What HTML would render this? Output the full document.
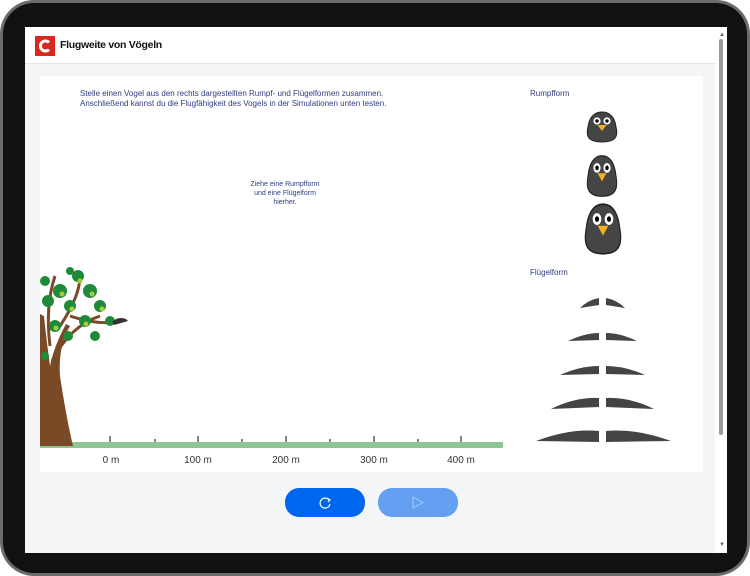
<!DOCTYPE html>
<html><head><meta charset="utf-8"><style>
*{margin:0;padding:0;box-sizing:border-box}
body{width:750px;height:576px;background:#fff;font-family:"Liberation Sans",sans-serif;position:relative;overflow:hidden}
.frame{position:absolute;left:0;top:0;width:750px;height:576px;border-radius:34px;background:#6b6b6b}
.inner{position:absolute;left:3px;top:3px;width:744px;height:570px;border-radius:31px;background:#111}
.screen{position:absolute;left:25px;top:27px;width:702px;height:526px;background:#f4f5f7;overflow:hidden}
.hdr{position:absolute;left:0;top:0;width:690px;height:37px;background:#fff;border-bottom:1px solid #e3e5ea}
.logo{position:absolute;left:10px;top:9px;width:20px;height:20px;background:#d9281f}
.title{position:absolute;left:35px;top:12px;font-size:10.5px;color:#111;font-weight:bold;letter-spacing:-.3px}
.sb{position:absolute;left:690px;top:0;width:12px;height:526px;background:#fff}
.thumb{position:absolute;left:694px;top:12px;width:4px;height:396px;background:#999;border-radius:2px}
.card{position:absolute;left:15px;top:49px;width:663px;height:396px;background:#fff}
.txt{position:absolute;color:#2e3d80;font-size:8px;line-height:10px}
.btn{position:absolute;top:461px;width:80px;height:29px;border-radius:14px}
</style></head><body>
<div class="frame"></div><div class="inner"></div>
<div class="screen">
<div class="hdr"><div class="logo"><svg width="20" height="20"><path d="M14 6.5A5 5 0 1 0 14 13.5" stroke="#fff" stroke-width="3" fill="none"/></svg></div><div class="title">Flugweite von Vögeln</div></div>
<div class="sb"></div><div class="thumb"></div>
<div style="position:absolute;left:694px;top:5px;font-size:6px;color:#666">▲</div>
<div style="position:absolute;left:694px;top:515px;font-size:6px;color:#666">▼</div>
<div class="card">
<div class="txt" style="left:40px;top:13px">Stelle einen Vogel aus den rechts dargestellten Rumpf- und Flügelformen zusammen.<br>Anschließend kannst du die Flugfähigkeit des Vogels in der Simulationen unten testen.</div>
<div class="txt" style="left:190px;top:104px;width:110px;text-align:center;font-size:7px;line-height:9px">Ziehe eine Rumpfform<br>und eine Flügelform<br>hierher.</div>
<div class="txt" style="left:490px;top:13px">Rumpfform</div>
<div class="txt" style="left:490px;top:192px">Flügelform</div>
<svg style="position:absolute;left:0;top:0" width="663" height="396">
<defs><g id="b"><path d="M0 -15C-9 -15 -13 -8 -14 0C-16 8 -15 15 0 15C15 15 16 8 14 0C13 -8 9 -15 0 -15Z" fill="#454545" stroke="#222"/><circle cx="-5" cy="-6" r="3.6" fill="#fff"/><circle cx="5" cy="-6" r="3.6" fill="#fff"/><circle cx="-5" cy="-6" r="1.7" fill="#000"/><circle cx="5" cy="-6" r="1.7" fill="#000"/><path d="M-4.5 -2L4.5 -2L0 4Z" fill="#f2b01e"/></g></defs>
<g transform="translate(562,51) scale(1,1)"><use href="#b"/></g>
<g transform="translate(562,100) scale(1,1.35)"><use href="#b"/></g>
<g transform="translate(563,153) scale(1.2,1.65)"><use href="#b"/></g>
<g fill="#444">
<path d="M559 229L540 232Q548 224 559 222Z"/><path d="M566 229L585 232Q577 224 566 222Z"/>
<path d="M559 264L528 265Q545 257 559 257Z"/><path d="M566 264L597 265Q580 257 566 257Z"/>
<path d="M559 298L520 299Q540 290 559 290Z"/><path d="M566 298L605 299Q585 290 566 290Z"/>
<path d="M559 331L511 333Q535 321 559 322Z"/><path d="M566 331L614 333Q590 321 566 322Z"/>
<path d="M559 366L496 365Q530 352 559 355Z"/><path d="M566 366L631 365Q595 352 566 355Z"/>
</g>
<rect x="0" y="366" width="463" height="6" fill="#8dc894"/>
<g stroke="#333" stroke-width="1.2">
<path d="M70 360V366M158 360V366M246 360V366M334 360V366M421 360V366"/>
<path d="M115 363V366M202 363V366M290 363V366M378 363V366"/></g>
<g font-family="Liberation Sans" font-size="10" fill="#333" text-anchor="middle">
<text x="71" y="387">0 m</text><text x="158" y="387">100 m</text><text x="246" y="387">200 m</text><text x="334" y="387">300 m</text><text x="421" y="387">400 m</text></g>
<path d="M0 370L33 370Q26 340 20 300Q18 270 30 250L26 248Q14 270 10 290Q6 260 4 240L0 238Z" fill="#7a4a26"/>
<path d="M12 285Q30 250 60 240M20 250Q40 220 40 200M10 270Q5 230 15 200M30 240Q60 250 80 245" stroke="#7a4a26" stroke-width="3" fill="none"/>
<g fill="#1f8a3a"><circle cx="38" cy="200" r="6"/><circle cx="50" cy="215" r="7"/><circle cx="20" cy="215" r="7"/><circle cx="60" cy="230" r="6"/><circle cx="30" cy="230" r="6"/><circle cx="8" cy="225" r="6"/><circle cx="45" cy="245" r="6"/><circle cx="15" cy="250" r="6"/><circle cx="70" cy="245" r="5"/><circle cx="5" cy="205" r="5"/><circle cx="28" cy="260" r="5"/><circle cx="55" cy="260" r="5"/><circle cx="5" cy="280" r="4"/><circle cx="30" cy="195" r="4"/></g>
<g fill="#a8cc3a"><circle cx="40" cy="205" r="2.5"/><circle cx="22" cy="218" r="2.5"/><circle cx="52" cy="218" r="2.5"/><circle cx="62" cy="233" r="2.5"/><circle cx="32" cy="233" r="2.5"/><circle cx="46" cy="248" r="2.5"/><circle cx="16" cy="252" r="2.5"/></g>
<path d="M72 246Q78 240 86 243L88 245L74 249Z" fill="#333"/>
</svg>
</div>
<div class="btn" style="left:260px;background:#0066ee"><svg width="80" height="29"><path d="M44 12A5 5 0 1 0 45 16" stroke="#fff" stroke-width="1.2" fill="none"/><path d="M42 10L45 12L43 14" stroke="#fff" stroke-width="1.2" fill="none"/></svg></div>
<div class="btn" style="left:353px;background:#63a0f2"><svg width="80" height="29"><path d="M35 9L45 14.5L35 20Z" stroke="#9cc3f7" stroke-width="1.2" fill="none"/></svg></div>
</div>
</body></html>
